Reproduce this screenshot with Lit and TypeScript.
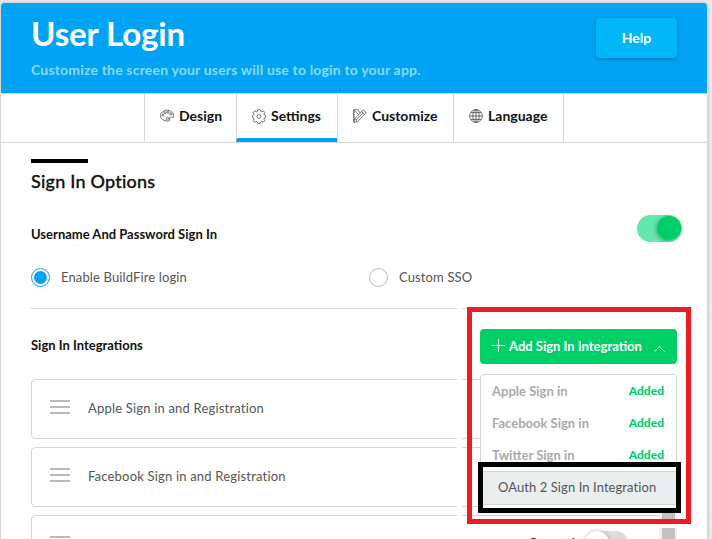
import { LitElement, html, css, svg } from "lit";
import { customElement } from "lit/decorators.js";

const icons: Record<string, unknown> = {
  palette: svg`<path d="M7.200 1.200C3.200 1.400.600 3.900.500 6.500c-.1 3.300 3.200 5.800 7 5.500 2.400-.1 2.600-1 2.200-2.100-.4-1-.1-1.700.8-1.800 1.400-.1 2.100.8 2.800.2C14.700 5.700 12 .900 7.200 1.200z"/><circle cx="3" cy="6.200" r="1"/><circle cx="5" cy="3.700" r="1"/><circle cx="8" cy="3.300" r="1"/><circle cx="10.800" cy="4.800" r="1"/><circle cx="7.500" cy="9.500" r="1.200"/>`,
  gear: svg`<path d="M5.900.6h2.200l.5 1.600 1.200.5 1.500-.8 1.500 1.500-.8 1.500.4 1.100 1.300.5v2.100l-1.300.5-.4 1.200.7 1.500-1.500 1.500-1.500-.8-1.100.5-.5 1.500H5.900l-.5-1.500-1.200-.5-1.500.8-1.500-1.500.8-1.500L1.600 9.100.4 8.600V6.500L1.600 6 2 4.900l-.8-1.500 1.500-1.500 1.500.8 1.200-.5z"/><circle cx="7" cy="7.500" r="1.900"/>`,
  pencil: svg`<path d="M1.600 9.800L10.300 1l3 2.900-8.900 8.800-3.500.8zM8.700 2.700l2.900 2.800M1.600 9.800l2.800 2.900M3.200 11l7.100-7.100M5.500 5.500L.7.800v12M.7.800h4.500l1.800 3.100M.7 3.200H2M.7 5.600h1.300M.7 8H2"/>`,
  globe: svg`<circle cx="7" cy="7" r="6.400"/><ellipse cx="7" cy="7" rx="3.200" ry="6.400"/><path d="M7 .6v12.800M.6 7h12.800M1.700 3.600h10.600M1.700 10.400h10.600"/>`,
};

const tabs = [
  { id: "design", label: "Design", icon: "palette" },
  { id: "settings", label: "Settings", icon: "gear", active: true },
  { id: "customize", label: "Customize", icon: "pencil" },
  { id: "language", label: "Language", icon: "globe" },
];

@customElement("app-root")
export class AppRoot extends LitElement {
  static styles = css`
    :host { display: block; position: relative; width: 712px; height: 539px; overflow: hidden; background: #e8eaea; font-family: Lato, sans-serif; color: #111; font-size: 14px; }
    * { box-sizing: border-box; }
    svg { display: block; fill: none; stroke: #444; stroke-width: .75; }
    .page { margin: 3px 0 0 0; width: 708px; height: 536px; background: #fff; border-left: 1px solid #d6d8d8; border-right: 1px solid #d4d8d8; border-radius: 4px 4px 0 0; overflow: hidden; box-shadow: 0 0 3px #0003; }
    header { height: 90px; background: #02a3f5; display: flex; justify-content: space-between; padding: 15px 30px 0; }
    h1 { margin: -3px 0 0; font-size: 33px; line-height: 36px; font-weight: 700; color: #fff; letter-spacing: -.1px; white-space: nowrap; }
    .sub { margin-top: 10px; line-height: 18px; font-weight: 700; color: #83dcff; white-space: nowrap; letter-spacing: .18px; }
    .help { width: 81px; height: 40px; border-radius: 4px; background: #02b7f8; color: #fff; font-weight: 700; line-height: 40px; text-align: center; box-shadow: 0 1px 4px #0004; }
    nav { height: 50px; border-top: 1px solid #d6d8d8; border-bottom: 1px solid #d6d8d8; display: flex; padding-left: 143px; }
    .tab { height: 48px; border-left: 1px solid #d6d8d8; display: flex; align-items: center; gap: 5px; padding: 0 0 4px 15px; font-weight: 700; white-space: nowrap; }
    .tab svg { flex: none; }
    .tab span { margin-top: -1px; }
    .design { width: 92px; }
    .settings { width: 101px; }
    .customize { width: 116px; }
    .language { width: 111px; border-right: 1px solid #d6d8d8; }
    .active { border-bottom: 4px solid #02a3f5; padding-bottom: 0; }
    main { padding: 16px 0 0 30px; }
    .mark { width: 57px; height: 4px; background: #000; }
    h2 { margin: 6px 0 0; font-size: 18px; line-height: 24px; font-weight: 500; letter-spacing: .22px; -webkit-text-stroke: .3px #111; }
    .row { display: flex; align-items: center; justify-content: space-between; padding-right: 25px; margin-top: 19px; height: 32px; }
    .row .label { padding-top: 11px; }
    .label { font-size: 13px; font-weight: 700; white-space: nowrap; }
    .switch { width: 45px; height: 27px; border-radius: 14px; background: #62e8ad; padding: 1px 1px 0 0; display: flex; justify-content: flex-end; }
    .knob { width: 24px; height: 24px; border-radius: 50%; background: #00cf68; box-shadow: -1px 1px 4px #0004; }
    .radios { display: grid; grid-template-columns: 338px 1fr; margin-top: 24px; height: 19px; }
    .radio { display: flex; align-items: center; gap: 11px; font-size: 13px; color: #555; white-space: nowrap; letter-spacing: .13px; }
    .radio span { margin-top: -1px; }
    .dot { width: 19px; height: 19px; border: 1px solid #bbb; border-radius: 50%; display: grid; place-items: center; }
    .on { border-color: #02a3f5; }
    .on::after { content: ""; width: 13px; height: 13px; border-radius: 50%; background: #02a3f5; }
    .rule { margin-top: 21px; height: 1px; width: 646px; background: #d6d8d8; }
    .heading { margin-top: 27px; height: 18px; line-height: 18px; }
    .list { margin-top: 25px; width: 629px; display: grid; gap: 8px; }
    .card { height: 60px; border: 1px solid #d3d5d5; border-radius: 4px; display: flex; align-items: center; padding-left: 18px; gap: 18px; color: #555; font-size: 13px; letter-spacing: .19px; white-space: nowrap; }
    .card span { margin-top: -2px; }
    .card .state { margin: -5px 0 0 auto; font-weight: 700; color: #111; }
    .off { flex: none; width: 43px; height: 24px; margin: -4px 31px 0 -8px; border-radius: 12px; background: #dcdcdc; }
    .off i { display: block; width: 24px; height: 24px; border-radius: 50%; background: #fff; box-shadow: 0 0 4px #0004; }
    .bars { flex: none; width: 20px; height: 14px; border-top: 2px solid #b9b9b9; border-bottom: 2px solid #b9b9b9; display: grid; align-items: center; margin-top: -4px; }
    .bars::after { content: ""; height: 2px; background: #b9b9b9; }
    .seam { position: absolute; left: 457px; top: 300px; width: 5px; height: 239px; background: #fff; }
    .scroll { position: absolute; left: 659px; top: 504px; width: 18px; height: 35px; background: #c1c1c1; border: solid #f1f1f1; border-width: 0 2px 0 3px; }
    .gap { position: absolute; left: 467px; top: 524px; width: 224px; height: 4px; background: #fff; }
    .box { position: absolute; left: 467px; top: 307px; width: 224px; height: 217px; border: 5px solid #ed1c24; }
    .add { position: absolute; left: 480px; top: 329px; width: 197px; height: 35px; background: #00cf68; border-radius: 4px; color: #fff; display: flex; align-items: center; font-size: 13px; font-weight: 700; padding: 0 12px; gap: 4px; white-space: nowrap; }
    .add svg { stroke: #fff; stroke-width: 1; flex: none; margin-top: -3px; }
    .add span { margin-top: -2px; }
    .add .caret { margin-left: auto; margin-top: 4px; }
    .menu { position: absolute; left: 480px; top: 374px; width: 197px; height: 132px; background: #fff; border: 1px solid #d3d5d5; border-radius: 4px 4px 0 0; }
    .item { height: 32px; display: flex; align-items: center; justify-content: space-between; padding: 0 12px 1px 11px; color: #aaa; font-weight: 700; font-size: 13px; }
    .item b { color: #00cf68; font-size: 12px; }
    .oauth { position: absolute; left: 478px; top: 462px; width: 203px; height: 51px; border: 5px solid #000; background: #ebeeef; box-shadow: inset 0 4px #fff, inset 0 5px #d3d5d5, inset 0 -3px #fff, inset 0 -4px #d3d5d5; color: #555; font-size: 13px; line-height: 41px; padding-left: 15px; white-space: nowrap; letter-spacing: .08px; }
  `;

  render() {
    return html`
      <div class="page">
        <header>
          <div><h1>User Login</h1><div class="sub">Customize the screen your users will use to login to your app.</div></div>
          <div class="help">Help</div>
        </header>
        <nav>${tabs.map((t) => html`<div class="tab ${t.id} ${t.active ? "active" : ""}"><svg width="14" height="15" viewBox="0 0 14 15">${icons[t.icon]}</svg><span>${t.label}</span></div>`)}</nav>
        <main>
          <div class="mark"></div>
          <h2>Sign In Options</h2>
          <div class="row"><span class="label">Username And Password Sign In</span><div class="switch"><div class="knob"></div></div></div>
          <div class="radios"><div class="radio"><i class="dot on"></i><span>Enable BuildFire login</span></div><div class="radio"><i class="dot"></i><span>Custom SSO</span></div></div>
          <div class="rule"></div>
          <div class="label heading">Sign In Integrations</div>
          <div class="list">
            <div class="card"><i class="bars"></i><span>Apple Sign in and Registration</span></div>
            <div class="card"><i class="bars"></i><span>Facebook Sign in and Registration</span></div>
            <div class="card"><i class="bars"></i><span class="state">Created</span><div class="off"><i></i></div></div>
          </div>
        </main>
      </div>
      <div class="seam"></div>
      <div class="scroll"></div>
      <div class="gap"></div>
      <div class="box"></div>
      <div class="add"><svg width="13" height="13" viewBox="0 0 13 13"><path d="M6.500 0v13M0 6.500h13"/></svg><span>Add Sign In Integration</span><svg class="caret" width="11" height="6" viewBox="0 0 11 6"><path d="M.5 5.500l5-5 5 5"/></svg></div>
      <div class="menu">${["Apple", "Facebook", "Twitter"].map((n) => html`<div class="item"><span>${n} Sign in</span><b>Added</b></div>`)}</div>
      <div class="oauth">OAuth 2 Sign In Integration</div>
    `;
  }
}
